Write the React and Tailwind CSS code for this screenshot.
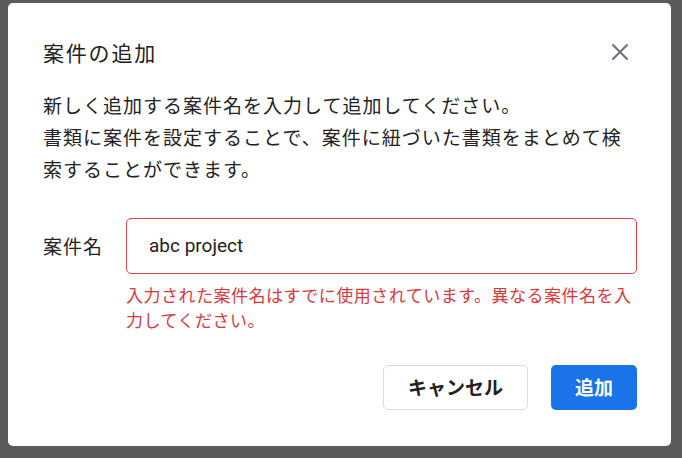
export default function App() {
  return (
    <div
      className="w-[682px] h-[458px] bg-[#5b5b5b] pt-[3px] pl-[8px]"
      style={{ fontFamily: '"Noto Sans CJK JP", "Noto Sans", sans-serif' }}
    >
      <div className="w-[663px] h-[443px] bg-white rounded-[5px] px-[34px] text-[#222]">
        <div className="flex items-center justify-between pt-[34px]">
          <h1 className="ml-[1px] text-[21px] tracking-[1.8px] leading-[30px]">案件の追加</h1>
          <button className="mr-[7px] text-[#6b7280]">
            <svg width="20" height="20" viewBox="0 0 20 20" fill="none" stroke="currentColor" strokeWidth="2" strokeLinecap="round">
              <path d="M3 3L17 17M17 3L3 17" />
            </svg>
          </button>
        </div>
        <p className="ml-[1px] mt-[22px] text-[19px] tracking-[1px] leading-[32px]">
          新しく追加する案件名を入力して追加してください。
          <br />
          書類に案件を設定することで、案件に紐づいた書類をまとめて検索することができます。
        </p>
        <div className="mt-[33px] flex items-start">
          <label className="w-[84px] pl-[1px] text-[19px] tracking-[1px] leading-[56px]">案件名</label>
          <div className="flex-1">
            <div className="h-[56px] border-[1.5px] border-[#e0464b] rounded-[5px] flex items-center px-[22px]">
              <span className="text-[19px]" style={{ fontFamily: '"Roboto", "Noto Sans CJK JP", sans-serif' }}>
                abc project
              </span>
            </div>
            <p className="mt-[8px] text-[17px] tracking-[0.5px] leading-[25px] text-[#d9393e]">
              入力された案件名はすでに使用されています。異なる案件名を入力してください。
            </p>
          </div>
        </div>
        <div className="mt-[33px] flex justify-end gap-[23px]">
          <button className="w-[145px] h-[45px] border border-[#dcdcdc] rounded-[5px] text-[19px] font-bold">
            キャンセル
          </button>
          <button className="w-[86px] h-[45px] bg-[#1a73e8] rounded-[5px] text-white text-[19px] font-bold">
            追加
          </button>
        </div>
      </div>
    </div>
  );
}
